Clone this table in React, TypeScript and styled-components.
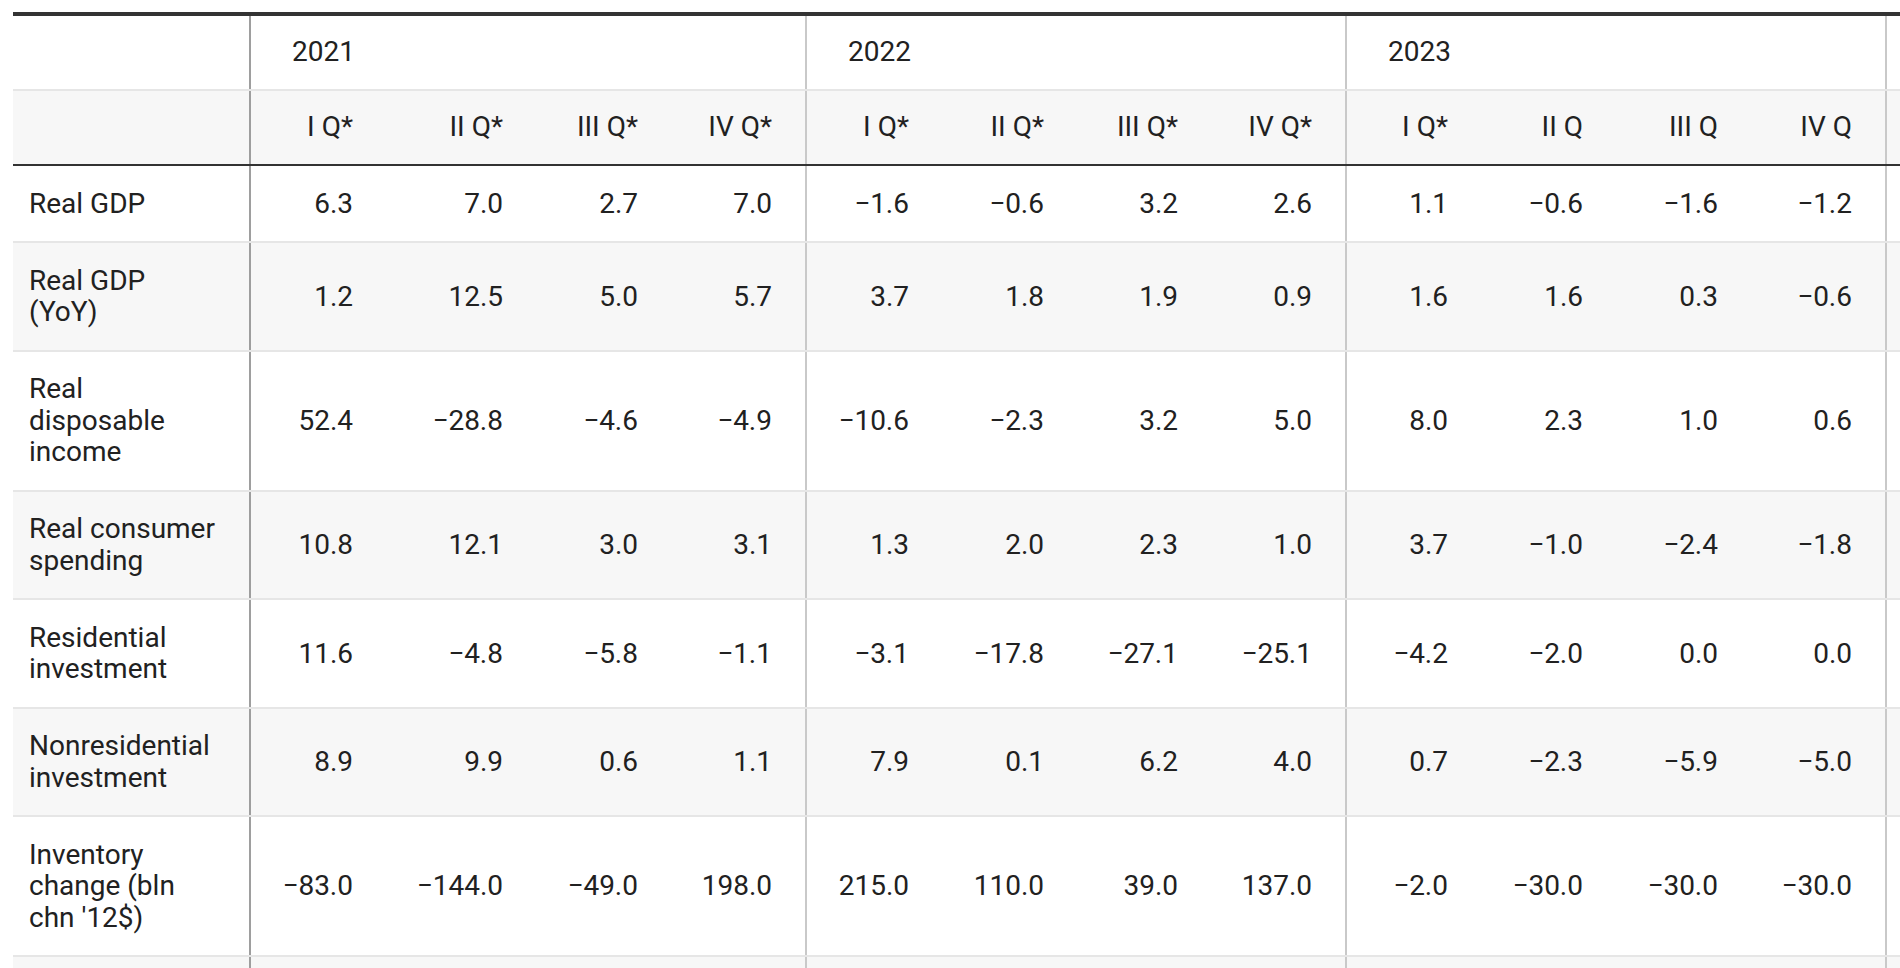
import React from 'react';
import styled, { createGlobalStyle } from 'styled-components';

const GlobalStyle = createGlobalStyle`
    * { box-sizing: border-box; }
    body {
        margin: 0;
        background: #ffffff;
        font-family: Roboto, "Liberation Sans", Arial, sans-serif;
        color: #212121;
    }
`;

// label + 4 quarters per year (2021, 2022, 2023) + the cut-off 2024 group
const COLUMNS = '236px 137px 150px 135px 134px 137px 135px 134px 134px 136px 135px 135px 134px 136px 136px 136px 136px';

const YEARS = [
    { year: '2021', quarters: ['I Q*', 'II Q*', 'III Q*', 'IV Q*'] },
    { year: '2022', quarters: ['I Q*', 'II Q*', 'III Q*', 'IV Q*'] },
    { year: '2023', quarters: ['I Q*', 'II Q', 'III Q', 'IV Q'] },
    { year: '', quarters: ['', '', '', ''] },
];

const ROWS: { label: string; values: string[] }[] = [
    { label: 'Real GDP', values: ['6.3', '7.0', '2.7', '7.0', '−1.6', '−0.6', '3.2', '2.6', '1.1', '−0.6', '−1.6', '−1.2'] },
    { label: 'Real GDP (YoY)', values: ['1.2', '12.5', '5.0', '5.7', '3.7', '1.8', '1.9', '0.9', '1.6', '1.6', '0.3', '−0.6'] },
    { label: 'Real disposable income', values: ['52.4', '−28.8', '−4.6', '−4.9', '−10.6', '−2.3', '3.2', '5.0', '8.0', '2.3', '1.0', '0.6'] },
    { label: 'Real consumer spending', values: ['10.8', '12.1', '3.0', '3.1', '1.3', '2.0', '2.3', '1.0', '3.7', '−1.0', '−2.4', '−1.8'] },
    { label: 'Residential investment', values: ['11.6', '−4.8', '−5.8', '−1.1', '−3.1', '−17.8', '−27.1', '−25.1', '−4.2', '−2.0', '0.0', '0.0'] },
    { label: 'Nonresidential investment', values: ['8.9', '9.9', '0.6', '1.1', '7.9', '0.1', '6.2', '4.0', '0.7', '−2.3', '−5.9', '−5.0'] },
    { label: "Inventory change (bln chn '12$)", values: ['−83.0', '−144.0', '−49.0', '198.0', '215.0', '110.0', '39.0', '137.0', '−2.0', '−30.0', '−30.0', '−30.0'] },
    { label: '', values: [] },
];

const App = () => {
    return (
        <>
            <GlobalStyle />
            <Viewport>
                <Table>
                    <Row $rule="light">
                        <LabelCell $header />
                        {YEARS.map((g, i) => (
                            <YearCell key={i} $edge={i === 0 ? 'strong' : 'soft'}>{g.year}</YearCell>
                        ))}
                    </Row>
                    <Row $shade $rule="dark">
                        <LabelCell $header />
                        {YEARS.map((g, i) =>
                            g.quarters.map((q, j) => (
                                <NumCell key={`${i}-${j}`} $header $edge={j === 0 ? (i === 0 ? 'strong' : 'soft') : undefined}>
                                    {q}
                                </NumCell>
                            ))
                        )}
                    </Row>
                    {ROWS.map((r, k) => (
                        <Row key={k} $shade={k % 2 === 1} $rule="light">
                            <LabelCell>{r.label}</LabelCell>
                            {Array.from({ length: 16 }).map((_, n) => (
                                <NumCell key={n} $edge={n % 4 === 0 ? (n === 0 ? 'strong' : 'soft') : undefined}>
                                    {r.values[n] ?? ''}
                                </NumCell>
                            ))}
                        </Row>
                    ))}
                </Table>
            </Viewport>
        </>
    );
};

const Viewport = styled.div`
    width: 1900px;
    height: 968px;
    padding: 12px 0 0 13px;
    overflow: hidden;
`;

const Table = styled.div`
    width: max-content;
    border-top: 4px solid #333333;
    font-size: 28px;
    line-height: 31.5px;
`;

const Row = styled.div<{ $shade?: boolean; $rule: 'light' | 'dark' }>`
    display: grid;
    grid-template-columns: ${COLUMNS};
    background: ${p => (p.$shade ? '#f7f7f7' : '#ffffff')};
    border-bottom: 2px solid ${p => (p.$rule === 'dark' ? '#333333' : '#e6e6e6')};
`;

const edgeColor = (edge?: 'strong' | 'soft') =>
    edge === 'strong' ? '#9e9e9e' : edge === 'soft' ? '#c9c9c9' : 'transparent';

const LabelCell = styled.div<{ $header?: boolean }>`
    display: flex;
    align-items: center;
    padding: ${p => (p.$header ? '20px 34px 21px 16px' : '21.75px 34px 21.75px 16px')};
    min-height: ${p => (p.$header ? '73px' : '75px')};
`;

const YearCell = styled.div<{ $edge?: 'strong' | 'soft' }>`
    grid-column: span 4;
    display: flex;
    align-items: center;
    padding: 20px 0 21px 41px;
    border-left: 2px solid ${p => edgeColor(p.$edge)};
`;

const NumCell = styled.div<{ $header?: boolean; $edge?: 'strong' | 'soft' }>`
    display: flex;
    align-items: center;
    justify-content: flex-end;
    white-space: nowrap;
    padding: ${p => (p.$header ? '20px 33px 21px 0' : '21.75px 33px 21.75px 0')};
    border-left: 2px solid ${p => edgeColor(p.$edge)};
`;

export default App;
